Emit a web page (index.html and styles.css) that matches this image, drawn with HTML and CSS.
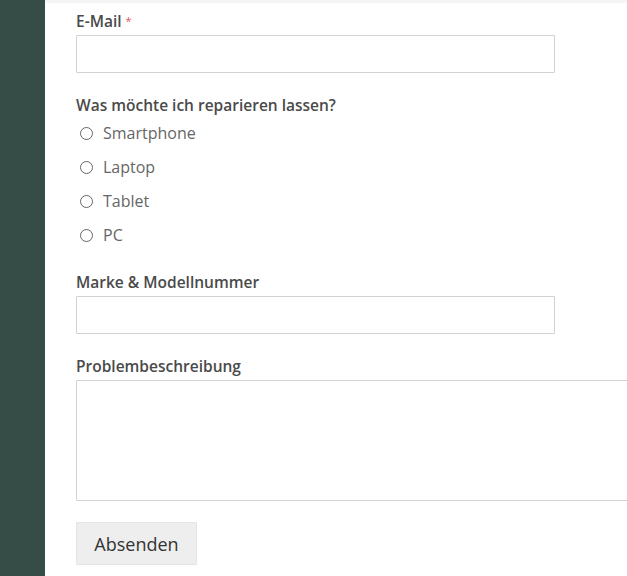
FILE: index.html
```html
<!DOCTYPE html>
<html lang="de">
<head>
<meta charset="utf-8">
<title>Reparaturanfrage</title>
<link rel="stylesheet" href="styles.css">
</head>
<body>
<div class="page">
  <aside class="sidebar"></aside>
  <main class="content">
    <form class="form">
      <div class="field">
        <label class="field-label">E-Mail <span class="req">*</span></label>
        <input class="text-input" type="text">
      </div>
      <div class="field field-radios">
        <div class="field-label">Was möchte ich reparieren lassen?</div>
        <ul class="radio-list">
          <li class="radio-row"><span class="radio"></span><span class="radio-text">Smartphone</span></li>
          <li class="radio-row"><span class="radio"></span><span class="radio-text">Laptop</span></li>
          <li class="radio-row"><span class="radio"></span><span class="radio-text">Tablet</span></li>
          <li class="radio-row"><span class="radio"></span><span class="radio-text">PC</span></li>
        </ul>
      </div>
      <div class="field field-after-radios">
        <label class="field-label">Marke &amp; Modellnummer</label>
        <input class="text-input" type="text">
      </div>
      <div class="field">
        <label class="field-label">Problembeschreibung</label>
        <textarea class="text-area"></textarea>
      </div>
      <button class="submit" type="button">Absenden</button>
    </form>
  </main>
</div>
</body>
</html>
```
FILE: styles.css
```css
html, body {
  margin: 0;
  padding: 0;
  background: #ffffff;
  overflow: hidden;
}
.page {
  display: flex;
  min-height: 576px;
  font-family: "Open Sans", "Liberation Sans", sans-serif;
}
.sidebar {
  width: 45px;
  flex: none;
  background: #354c47;
}
.content {
  flex: 1;
  border-top: 3px solid #f5f5f5;
  padding: 7px 0 0 31px;
}
.form {
  display: flex;
  flex-direction: column;
}
.field {
  display: flex;
  flex-direction: column;
  margin-bottom: 21px;
}
.field-radios {
  margin-bottom: 19px;
}
.field-label {
  font-size: 15.5px;
  font-weight: 600;
  line-height: 22px;
  color: #4a4a4a;
  margin-bottom: 3px;
}
.field-radios .field-label {
  margin-bottom: 0;
}
.req {
  color: #e05a5a;
  font-size: 11px;
  vertical-align: top;
  font-weight: 400;
}
.text-input {
  box-sizing: border-box;
  width: 479px;
  height: 38px;
  border: 1px solid #d2d2d2;
  border-radius: 1px;
  margin: 0;
  padding: 0 8px;
  background: #fff;
}
.text-area {
  box-sizing: border-box;
  width: 580px;
  height: 121px;
  border: 1px solid #d2d2d2;
  border-radius: 1px;
  margin: 0;
  resize: none;
  background: #fff;
}
.radio-list {
  list-style: none;
  margin: 0;
  padding: 0;
}
.radio-row {
  display: flex;
  align-items: center;
  height: 34px;
}
.radio {
  box-sizing: border-box;
  width: 13px;
  height: 13px;
  border: 1.5px solid #666;
  border-radius: 50%;
  margin-left: 4px;
  margin-right: 10px;
}
.radio-text {
  font-size: 16px;
  color: #666;
}
.submit {
  align-self: flex-start;
  box-sizing: border-box;
  width: 121px;
  height: 43px;
  margin: 0;
  background: #eeeeee;
  border: 1px solid #e4e4e4;
  border-radius: 1px;
  font-family: "Open Sans", "Liberation Sans", sans-serif;
  font-size: 18px;
  font-weight: 400;
  color: #333;
  padding: 0;
}
```
